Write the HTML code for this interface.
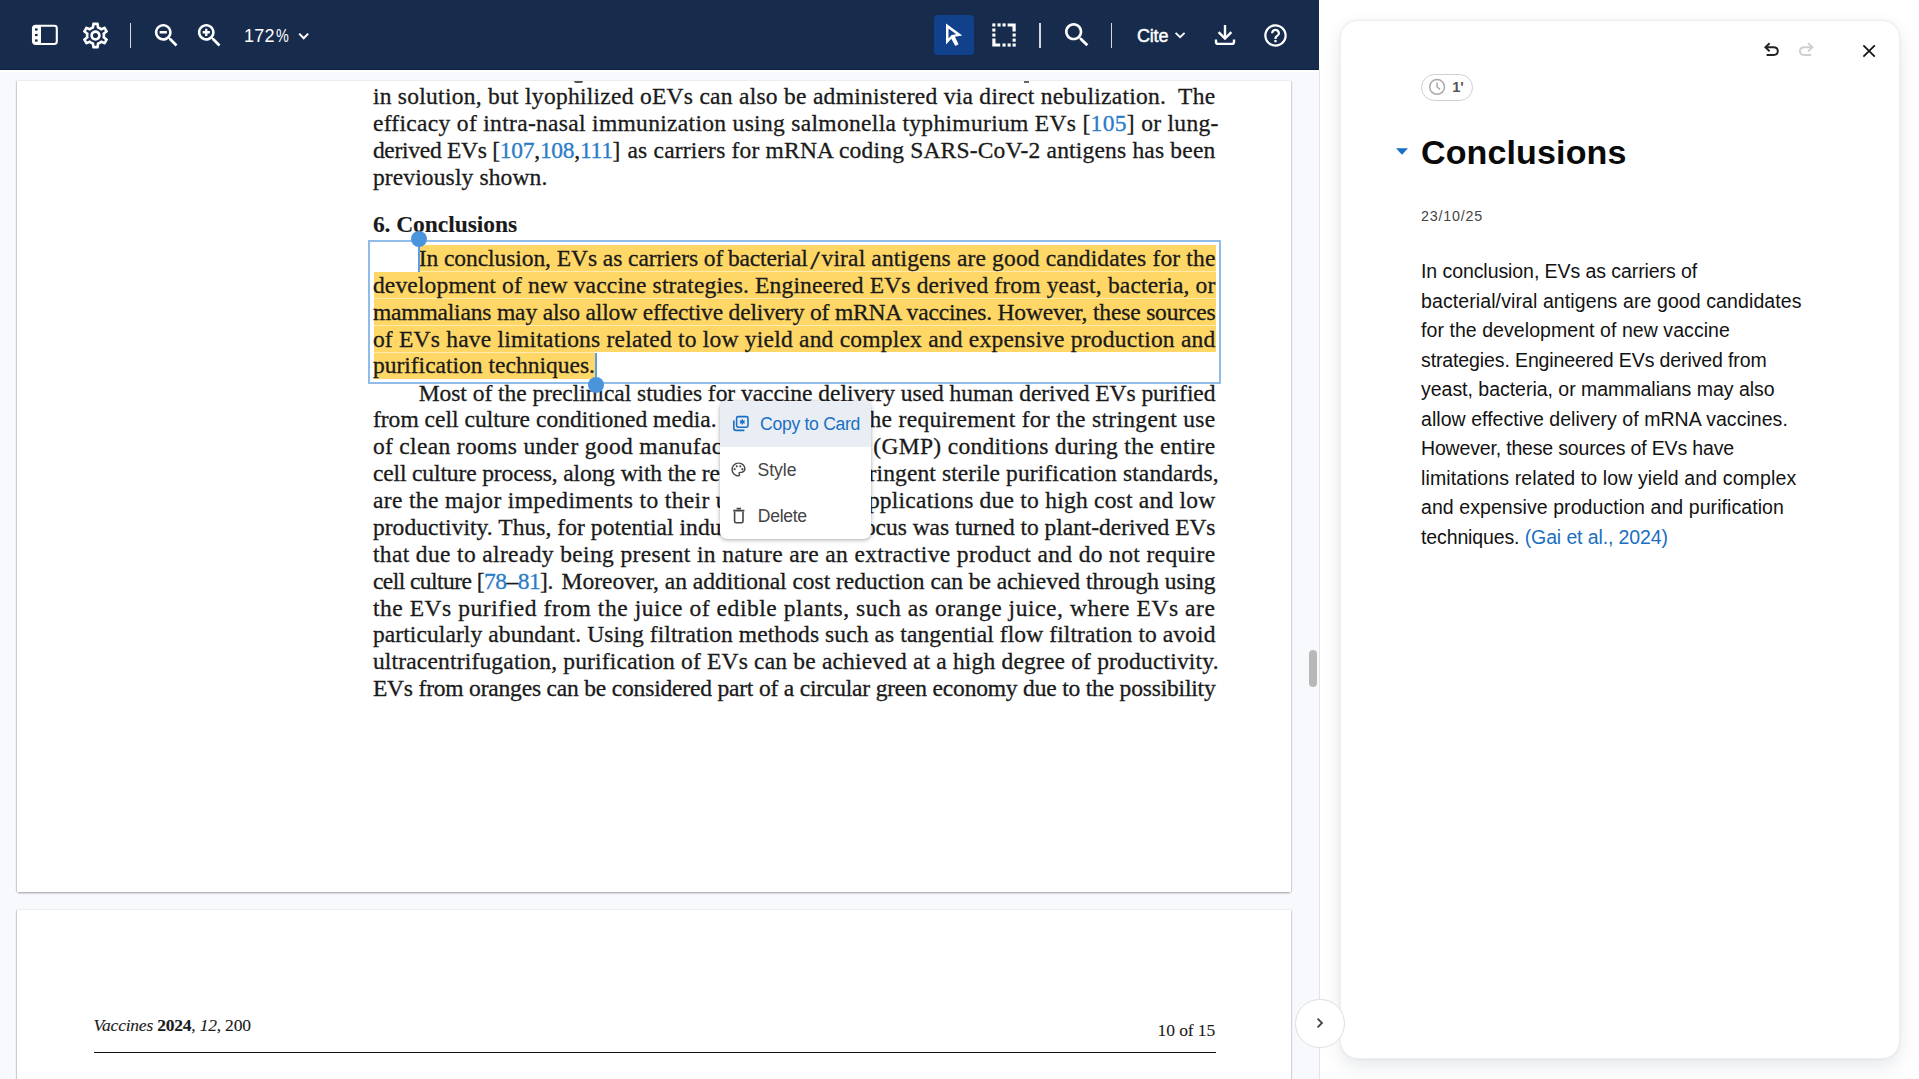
<!DOCTYPE html>
<html>
<head>
<meta charset="utf-8">
<title>PDF viewer</title>
<style>
*{box-sizing:border-box;margin:0;padding:0}
html,body{width:1919px;height:1079px;overflow:hidden;background:#fff;font-family:"Liberation Sans",sans-serif;}
.abs{position:absolute}
#pdfarea{position:absolute;left:0;top:0;width:1319px;height:1079px;background:#f8f9fc;overflow:hidden}
#toolbar{position:absolute;left:0;top:0;width:1319px;height:70px;background:#172b4d;border-bottom:1px solid #0d2247;z-index:5}
#tbline{position:absolute;left:0;top:70px;width:1319px;height:1.5px;background:#fff;z-index:5}
.page{position:absolute;left:17px;width:1274px;background:#fff;box-shadow:0 2px 2px -1px rgba(0,0,0,.34),-1px 0 1px rgba(0,0,0,.16),1px 0 1px rgba(0,0,0,.13)}
#p1{top:81px;height:811px}
#p2{top:910px;height:200px}
.ln{position:absolute;height:27px;line-height:27px;font-family:"Liberation Serif",serif;font-size:23.5px;color:#1a1a1a;white-space:nowrap;z-index:2;-webkit-text-stroke:0.3px #1a1a1a}
.ln a{-webkit-text-stroke:0.3px #2a7cc7}
.ln b{-webkit-text-stroke:0.1px #1a1a1a}
.ln a{color:#2a7cc7}
.hl{position:absolute;background:#ffd766;z-index:1}
#bbox{position:absolute;left:368px;top:240px;width:853px;height:144px;border:2px solid #8fbde8;z-index:1}
.hdl{position:absolute;width:16px;height:16px;border-radius:50%;background:#4a94dc;z-index:3}
.stem{position:absolute;width:2.5px;background:#5b9fe0;z-index:3}
#vsep{position:absolute;left:1319px;top:70px;width:1px;height:1009px;background:#e1e4ea}
#right{position:absolute;left:1320px;top:0;width:599px;height:1079px;background:#fff}
#card{position:absolute;left:1340px;top:20px;width:560px;height:1039px;background:#fff;border-radius:18px;border:1px solid #eceef1;box-shadow:0 7px 18px rgba(23,43,77,.11),0 0 3px rgba(23,43,77,.06)}
.rl{position:absolute;left:1421px;height:30px;line-height:30px;font-size:19.5px;color:#121212;white-space:nowrap}
.rl a{color:#1b6fbf}
#menu{position:absolute;left:720px;top:401px;width:150.5px;height:137.5px;background:#fff;border-radius:7px;box-shadow:0 1px 4px rgba(0,0,0,.32),0 0 1px rgba(0,0,0,.2);overflow:hidden;z-index:4}
.mi{position:absolute;left:0;width:151px;height:46px;font-size:17.6px;color:#444;white-space:nowrap}
.mi span{position:absolute;height:22px;line-height:22px}
.tbtxt{position:absolute;color:#fff;font-size:18px;height:22px;line-height:22px;white-space:nowrap}
.tdiv{position:absolute;background:#d4d7dd}
svg{position:absolute;overflow:visible}
</style>
</head>
<body>
<div id="pdfarea">
  <div class="page" id="p1"></div>
  <div class="page" id="p2"></div>
  <!-- highlight rows -->
  <div class="abs" style="left:420px;top:270px;width:795.5px;height:3px;background:#ffebb0;z-index:1"></div>
  <div class="abs" style="left:373.5px;top:296px;width:842px;height:32px;background:#ffebb0;z-index:1"></div>
  <div class="abs" style="left:373.5px;top:350px;width:221px;height:4px;background:#ffebb0;z-index:1"></div>
  <div class="hl" style="left:420px;top:245.3px;width:795.5px;height:26px"></div>
  <div class="hl" style="left:373.5px;top:272.1px;width:842.3px;height:25.9px"></div>
  <div class="hl" style="left:373.5px;top:298.9px;width:842px;height:26px"></div>
  <div class="hl" style="left:373.5px;top:325.9px;width:842px;height:25.9px"></div>
  <div class="hl" style="left:373.5px;top:352.9px;width:221px;height:26px"></div>
  <div id="bbox"></div>
<div class="ln" style="left:372.9px;top:83px;letter-spacing:0.272px">in solution, but lyophilized oEVs can also be administered via direct nebulization.&nbsp; The</div>
<div class="ln" style="left:372.9px;top:110px;letter-spacing:0.316px">efficacy of intra-nasal immunization using salmonella typhimurium EVs [<a>105</a>] or lung-</div>
<div class="ln" style="left:372.9px;top:137px;letter-spacing:-0.276px">derived EVs [<a>107</a>,<a>108</a>,<a>111</a>]</div>
<div class="ln" style="left:627.5px;top:137px;letter-spacing:0.189px">as carriers for mRNA coding SARS-CoV-2 antigens has been</div>
<div class="ln" style="left:372.9px;top:164px;letter-spacing:0.134px">previously shown.</div>
<div class="ln" style="left:372.9px;top:211px;letter-spacing:-0.062px"><b>6. Conclusions</b></div>
<div class="ln" style="left:418.7px;top:245px;letter-spacing:-0.064px">In conclusion, EVs as carriers of</div>
<div class="ln" style="left:727.9px;top:245px;letter-spacing:-0.132px">bacterial</div>
<div class="ln" style="left:809.2px;top:245px;letter-spacing:0.000px"><span style="display:inline-block;transform:translate(1.3px,2.6px) scale(1.45,1.08);transform-origin:0 72%">/</span></div>
<div class="ln" style="left:821.5px;top:245px;letter-spacing:0.152px">viral antigens are good candidates for the</div>
<div class="ln" style="left:372.9px;top:272px;letter-spacing:0.162px">development of new vaccine strategies. Engineered EVs derived from yeast, bacteria, or</div>
<div class="ln" style="left:372.9px;top:299px;letter-spacing:-0.167px">mammalians may also allow effective delivery of mRNA vaccines. However, these sources</div>
<div class="ln" style="left:372.9px;top:326px;letter-spacing:0.216px">of EVs have limitations related to low yield and complex and expensive production and</div>
<div class="ln" style="left:372.9px;top:352px;letter-spacing:0.009px">purification techniques.</div>
<div class="ln" style="left:418.7px;top:380px;letter-spacing:-0.039px">Most of the preclinical studies for vaccine delivery used human derived EVs purified</div>
<div class="ln" style="left:372.9px;top:406px;letter-spacing:0.031px">from cell culture conditioned media.</div>
<div class="ln" style="left:862.7px;top:406px;letter-spacing:0.311px">the requirement for the stringent use</div>
<div class="ln" style="left:372.9px;top:433px;letter-spacing:0.331px">of clean rooms under good manufac</div>
<div class="ln" style="left:873.3px;top:433px;letter-spacing:0.313px">(GMP) conditions during the entire</div>
<div class="ln" style="left:372.9px;top:460px;letter-spacing:-0.124px">cell culture process, along with the re</div>
<div class="ln" style="left:868.6px;top:460px;letter-spacing:0.108px">ringent sterile purification standards,</div>
<div class="ln" style="left:372.9px;top:487px;letter-spacing:0.365px">are the major impediments to their u</div>
<div class="ln" style="left:867.9px;top:487px;letter-spacing:0.228px">pplications due to high cost and low</div>
<div class="ln" style="left:372.9px;top:514px;letter-spacing:0.053px">productivity. Thus, for potential indu</div>
<div class="ln" style="left:863.9px;top:514px;letter-spacing:-0.041px">ocus was turned to plant-derived EVs</div>
<div class="ln" style="left:372.9px;top:541px;letter-spacing:0.358px">that due to already being present in nature are an extractive product and do not require</div>
<div class="ln" style="left:372.9px;top:568px;letter-spacing:-0.543px">cell culture [<a>78</a>–<a>81</a>].</div>
<div class="ln" style="left:561.6px;top:568px;letter-spacing:-0.024px">Moreover, an additional cost reduction can be achieved through using</div>
<div class="ln" style="left:372.9px;top:595px;letter-spacing:0.554px">the EVs purified from the juice of edible plants, such as orange juice, where EVs are</div>
<div class="ln" style="left:372.9px;top:621px;letter-spacing:0.094px">particularly abundant. Using filtration methods such as tangential flow filtration to avoid</div>
<div class="ln" style="left:372.9px;top:648px;letter-spacing:0.178px">ultracentrifugation, purification of EVs can be achieved at a high degree of productivity.</div>
<div class="ln" style="left:372.9px;top:675px;letter-spacing:-0.187px">EVs from oranges can be considered part of a circular green economy due to the possibility</div>
  <!-- clipped descender bits from the line above the fold -->
  <div class="abs" style="left:574px;top:81px;width:9px;height:1.5px;background:#555;border-radius:0 0 4px 4px;z-index:2"></div>
  <div class="abs" style="left:1024px;top:81px;width:5px;height:1.5px;background:#666;z-index:2"></div>
  <!-- selection handles -->
  <div class="stem" style="left:417.8px;top:245px;height:26.5px"></div>
  <div class="hdl" style="left:411px;top:231px"></div>
  <div class="stem" style="left:594.6px;top:353px;height:26px"></div>
  <div class="hdl" style="left:588px;top:377.3px"></div>
  <!-- page 2 header -->
  <div class="ln" style="left:93.5px;top:1012px;font-size:17.5px;-webkit-text-stroke:0.1px #1a1a1a;letter-spacing:-0.212px"><i>Vaccines</i> <b>2024</b>, <i>12</i>, 200</div>
  <div class="ln" style="left:1157.6px;top:1017px;font-size:17.5px;-webkit-text-stroke:0.1px #1a1a1a;letter-spacing:-0.104px">10 of 15</div>
  <div class="abs" style="left:93.5px;top:1052px;width:1122px;height:1.4px;background:#111;z-index:2"></div>
  <!-- scrollbar thumb -->
  <div class="abs" style="left:1309px;top:650px;width:8px;height:37px;border-radius:4px;background:#b8b8b9;z-index:2"></div>

  <div id="toolbar">
    <!-- sidebar toggle -->
    <svg style="left:30px;top:23px" width="30" height="24" viewBox="0 0 30 24">
      <rect x="3" y="2.8" width="23.8" height="18.2" rx="2.4" fill="none" stroke="#fff" stroke-width="2.1"/>
      <rect x="3" y="3" width="8" height="18" fill="#fff"/>
      <rect x="5" y="5.4" width="2.6" height="2.2" fill="#172b4d"/>
      <rect x="5" y="10.9" width="2.6" height="2.2" fill="#172b4d"/>
      <rect x="5" y="16.4" width="2.6" height="2.2" fill="#172b4d"/>
    </svg>
    <!-- gear -->
    <svg style="left:79.5px;top:19.5px" width="31" height="31" viewBox="0 0 24 24"><path fill="#fff" d="M19.43 12.98c.04-.32.07-.64.07-.98 0-.34-.03-.66-.07-.98l2.11-1.65c.19-.15.24-.42.12-.64l-2-3.46c-.09-.16-.26-.25-.44-.25-.06 0-.12.01-.17.03l-2.49 1c-.52-.4-1.08-.73-1.69-.98l-.38-2.65C14.46 2.18 14.25 2 14 2h-4c-.25 0-.46.18-.49.42l-.38 2.65c-.61.25-1.17.59-1.69.98l-2.49-1c-.06-.02-.12-.03-.18-.03-.17 0-.34.09-.43.25l-2 3.46c-.13.22-.07.49.12.64l2.11 1.65c-.04.32-.07.65-.07.98 0 .33.03.66.07.98l-2.11 1.65c-.19.15-.24.42-.12.64l2 3.46c.09.16.26.25.44.25.06 0 .12-.01.17-.03l2.49-1c.52.4 1.08.73 1.69.98l.38 2.65c.03.24.24.42.49.42h4c.25 0 .46-.18.49-.42l.38-2.65c.61-.25 1.17-.59 1.69-.98l2.49 1c.06.02.12.03.18.03.17 0 .34-.09.43-.25l2-3.46c.12-.22.07-.49-.12-.64l-2.11-1.65zm-1.98-1.71c.04.31.05.52.05.73 0 .21-.02.43-.05.73l-.14 1.13.89.7 1.08.84-.7 1.21-1.27-.51-1.04-.42-.9.68c-.43.32-.84.56-1.25.73l-1.06.43-.16 1.13-.2 1.35h-1.4l-.19-1.35-.16-1.13-1.06-.43c-.43-.18-.83-.41-1.23-.71l-.91-.7-1.06.43-1.27.51-.7-1.21 1.08-.84.89-.7-.14-1.13c-.03-.31-.05-.54-.05-.74s.02-.43.05-.73l.14-1.13-.89-.7-1.08-.84.7-1.21 1.27.51 1.04.42.9-.68c.43-.32.84-.56 1.25-.73l1.06-.43.16-1.13.2-1.35h1.39l.19 1.35.16 1.13 1.06.43c.43.18.83.41 1.23.71l.91.7 1.06-.43 1.27-.51.7 1.21-1.07.85-.89.7.14 1.13zM12 8c-2.21 0-4 1.79-4 4s1.79 4 4 4 4-1.79 4-4-1.79-4-4-4zm0 6c-1.1 0-2-.9-2-2s.9-2 2-2 2 .9 2 2-.9 2-2 2z"/></svg>
    <div class="tdiv" style="left:129.7px;top:23px;width:1.6px;height:25px"></div>
    <!-- zoom out -->
    <svg style="left:150.5px;top:19.6px" width="31" height="31" viewBox="0 0 24 24"><path fill="#fff" d="M15.5 14h-.79l-.28-.27C15.41 12.59 16 11.11 16 9.5 16 5.91 13.09 3 9.5 3S3 5.91 3 9.5 5.91 16 9.5 16c1.61 0 3.09-.59 4.23-1.57l.27.28v.79l5 4.99L20.49 19l-4.99-5zm-6 0C7.01 14 5 11.99 5 9.5S7.01 5 9.5 5 14 7.01 14 9.5 11.99 14 9.5 14zM6.7 8.6h5.6v1.8H6.7z"/></svg>
    <!-- zoom in -->
    <svg style="left:193.7px;top:19.6px" width="31" height="31" viewBox="0 0 24 24"><path fill="#fff" d="M15.5 14h-.79l-.28-.27C15.41 12.59 16 11.11 16 9.5 16 5.91 13.09 3 9.5 3S3 5.91 3 9.5 5.91 16 9.5 16c1.61 0 3.09-.59 4.23-1.57l.27.28v.79l5 4.99L20.49 19l-4.99-5zm-6 0C7.01 14 5 11.99 5 9.5S7.01 5 9.5 5 14 7.01 14 9.5 11.99 14 9.5 14zM8.6 6.7h1.8v1.9h1.9v1.8h-1.9v1.9H8.6v-1.9H6.7V8.600h1.900z"/></svg>
    <div class="tbtxt" style="left:244px;top:24.6px;letter-spacing:0.284px">172</div>
    <div class="tbtxt" style="left:276.4px;top:24.6px;transform:scaleX(.8);transform-origin:0 0">%</div>
    <svg style="left:297px;top:30px" width="14" height="12" viewBox="0 0 14 12"><path d="M2.2 3.6 L6.7 8.2 L11.2 3.6" fill="none" stroke="#fff" stroke-width="2"/></svg>

    <!-- selected cursor tool -->
    <div class="abs" style="left:934px;top:15px;width:40px;height:40px;border-radius:4px;background:#11418a"></div>
    <svg style="left:934px;top:15px" width="40" height="40" viewBox="934 15 40 40"><path fill="#fff" fill-rule="evenodd" d="M946 23.6 L962.3 35.6 L954.9 36.8 L958.6 44.3 L955.3 46.1 L951.3 38.7 L946 44.6 Z M948.5 28.6 L948.5 38.6 L951.6 35 L956.2 34.3 Z"/></svg>
    <!-- marquee -->
    <svg style="left:992px;top:23px" width="24" height="24" viewBox="0 0 24 24" fill="#fff">
      <rect x="0.3" y="0.4" width="3.1" height="3.1"/><rect x="5.5" y="0.4" width="3.1" height="3.1"/><rect x="10.5" y="0.4" width="3.1" height="3.1"/>
      <path d="M15.6 0.4 H23.7 V8.4 H20.5 V3.6 H15.6 Z"/>
      <rect x="20.6" y="10.5" width="3.1" height="3.1"/><rect x="20.6" y="15.6" width="3.1" height="3.1"/><rect x="20.6" y="20.5" width="3.1" height="3.1"/>
      <rect x="0.3" y="5.5" width="3.1" height="3.1"/><rect x="0.3" y="10.5" width="3.1" height="3.1"/>
      <path d="M0.3 15.6 H3.5 V20.4 H8.2 V23.6 H0.3 Z"/>
      <rect x="10.5" y="20.5" width="3.1" height="3.1"/><rect x="15.6" y="20.5" width="3.1" height="3.1"/>
    </svg>
    <div class="tdiv" style="left:1039px;top:23px;width:2px;height:25px"></div>
    <!-- search -->
    <svg style="left:1060.6px;top:19.3px" width="32" height="32" viewBox="0 0 24 24"><path fill="#fff" d="M15.5 14h-.79l-.28-.27C15.41 12.59 16 11.11 16 9.5 16 5.91 13.09 3 9.5 3S3 5.91 3 9.5 5.91 16 9.5 16c1.61 0 3.09-.59 4.23-1.57l.27.28v.79l5 4.99L20.49 19l-4.99-5zm-6 0C7.01 14 5 11.99 5 9.5S7.01 5 9.5 5 14 7.01 14 9.5 11.99 14 9.5 14z"/></svg>
    <div class="tdiv" style="left:1111px;top:23px;width:1.2px;height:25px"></div>
    <div class="tbtxt" style="left:1137px;top:24.6px;-webkit-text-stroke:0.45px #fff;letter-spacing:-0.204px">Cite</div>
    <svg style="left:1173px;top:29px" width="14" height="12" viewBox="0 0 14 12"><path d="M2.6 3.8 L7.1 8.2 L11.6 3.8" fill="none" stroke="#fff" stroke-width="1.8"/></svg>
    <!-- download -->
    <svg style="left:1213px;top:23px" width="24" height="24" viewBox="1213 23 24 24" fill="none" stroke="#fff" stroke-width="2.4">
      <path d="M1225 25 V38"/><path d="M1218.6 32.2 L1225 38.6 L1231.4 32.2"/>
      <path d="M1216 39.4 V42 Q1216 43.9 1218 43.9 H1232 Q1234 43.9 1234 42 V39.4"/>
    </svg>
    <!-- help -->
    <svg style="left:1261.6px;top:21.5px" width="27" height="27" viewBox="0 0 24 24"><path fill="#fff" d="M11 18h2v-2h-2v2zm1-16C6.48 2 2 6.48 2 12s4.48 10 10 10 10-4.48 10-10S17.52 2 12 2zm0 18c-4.41 0-8-3.59-8-8s3.590-8 8-8 8 3.590 8 8-3.590 8-8 8zm0-14c-2.210 0-4 1.790-4 4h2c0-1.100.9-2 2-2s2 .9 2 2c0 2-3 1.750-3 5h2c0-2.250 3-2.500 3-5 0-2.210-1.790-4-4-4z"/></svg>
  </div>
  <div id="tbline"></div>
</div>
<div id="right"></div>
<div id="vsep"></div>
<div id="card"></div>

<!-- card header icons -->
<svg style="left:1762px;top:40px" width="20" height="18" viewBox="1762 40 20 18" fill="none" stroke="#222" stroke-width="1.9">
  <path d="M1769.6 43.2 L1765.4 47.2 L1769.6 51.2"/><path d="M1765.8 47.2 H1773.6 Q1777.8 47.2 1777.8 51.1 Q1777.8 55 1773.6 55 H1766.6"/>
</svg>
<svg style="left:1797px;top:40px" width="20" height="18" viewBox="1797 40 20 18" fill="none" stroke="#cfcfcf" stroke-width="1.9">
  <path d="M1808.2 43.2 L1812.4 47.2 L1808.2 51.2"/><path d="M1812 47.2 H1804.2 Q1800 47.2 1800 51.1 Q1800 55 1804.2 55 H1811.2"/>
</svg>
<svg style="left:1861px;top:43px" width="16" height="16" viewBox="1861 43 16 16" fill="none" stroke="#111" stroke-width="1.7">
  <path d="M1863.4 45.4 L1874.8 56.6 M1874.8 45.4 L1863.4 56.6"/>
</svg>
<!-- reading time pill -->
<div class="abs" style="left:1421px;top:74px;width:52px;height:27px;border:1px solid #cfcfcf;border-radius:14px;background:#fff"></div>
<svg style="left:1428px;top:78px" width="18" height="18" viewBox="0 0 18 18" fill="none" stroke="#a9a9a9" stroke-width="1.5"><circle cx="9.1" cy="8.9" r="7.4"/><path d="M9.1 4.6 V9 L12 11.3"/></svg>
<div class="abs" style="left:1452.3px;top:78px;font-size:14.5px;font-weight:bold;color:#555;line-height:18px">1'</div>
<!-- caret + title -->
<svg style="left:1395px;top:147px" width="14" height="9" viewBox="0 0 14 9"><path d="M1 1.2 H13 L7 7.7 Z" fill="#1a6fc4"/></svg>
<div class="abs" style="left:1421px;top:132px;font-size:34px;font-weight:bold;color:#0a0a0a;line-height:40px;white-space:nowrap;letter-spacing:0.134px">Conclusions</div>
<div class="abs" style="left:1421px;top:206.5px;font-size:14.3px;color:#444;line-height:18px;white-space:nowrap;letter-spacing:0.793px">23/10/25</div>
<div class="rl" style="top:256px;letter-spacing:-0.071px">In conclusion, EVs as carriers of</div>
<div class="rl" style="top:286px;letter-spacing:0.101px">bacterial/viral antigens are good candidates</div>
<div class="rl" style="top:315px;letter-spacing:0.063px">for the development of new vaccine</div>
<div class="rl" style="top:345px;letter-spacing:-0.116px">strategies. Engineered EVs derived from</div>
<div class="rl" style="top:374px;letter-spacing:-0.020px">yeast, bacteria, or mammalians may also</div>
<div class="rl" style="top:404px;letter-spacing:0.048px">allow effective delivery of mRNA vaccines.</div>
<div class="rl" style="top:433px;letter-spacing:-0.170px">However, these sources of EVs have</div>
<div class="rl" style="top:463px;letter-spacing:0.129px">limitations related to low yield and complex</div>
<div class="rl" style="top:492px;letter-spacing:0.073px">and expensive production and purification</div>
<div class="rl" style="top:522px;letter-spacing:-0.120px">techniques. <a>(Gai et al., 2024)</a></div>

<!-- collapse button -->
<div class="abs" style="left:1295.2px;top:998.6px;width:49.4px;height:49.4px;border-radius:50%;background:#fff;border:1px solid #dcdfe4"></div>
<svg style="left:1313px;top:1016px" width="14" height="14" viewBox="0 0 14 14"><path d="M4.6 2.6 L9 7 L4.6 11.4" fill="none" stroke="#444" stroke-width="1.8"/></svg>

<!-- context menu -->
<div id="menu">
  <div class="mi" style="top:0;background:#e9eef4;color:#1a6fc4"><span style="left:40px;top:12px;letter-spacing:-0.296px">Copy to Card</span></div>
  <div class="mi" style="top:46px"><span style="left:37.5px;top:12px;letter-spacing:-0.045px">Style</span></div>
  <div class="mi" style="top:92px"><span style="left:37.8px;top:12px;letter-spacing:-0.310px">Delete</span></div>
  <!-- copy-to-card icon -->
  <svg style="left:12px;top:14px" width="18" height="18" viewBox="0 0 18 18" fill="none" stroke="#1a6fc4" stroke-width="1.6">
    <rect x="4.6" y="1.6" width="11.4" height="10.6" rx="1.6"/>
    <path d="M1.8 5.4 V13 Q1.8 15.4 4.2 15.4 H12.4"/>
    <path d="M10.3 4.3 V9.5 M7.9 5.6 L12.7 8.2 M12.7 5.6 L7.9 8.2" stroke-width="1.3"/>
  </svg>
  <!-- palette icon -->
  <svg style="left:9.8px;top:59.8px" width="17" height="17" viewBox="0 0 24 24"><path fill="#444" d="M12 22C6.49 22 2 17.51 2 12S6.49 2 12 2s10 4.040 10 9c0 3.310-2.690 6-6 6h-1.770c-.28 0-.5.220-.5.500 0 .12.050.23.130.33.410.47.640 1.060.640 1.670A2.500 2.500 0 0 1 12 22zm0-18c-4.410 0-8 3.590-8 8s3.590 8 8 8c.28 0 .5-.22.5-.5a.540.540 0 0 0-.14-.35c-.41-.46-.63-1.050-.63-1.650a2.500 2.500 0 0 1 2.500-2.500H16c2.210 0 4-1.790 4-4 0-3.860-3.590-7-8-7z"/><circle cx="6.5" cy="11.5" r="1.5" fill="#444"/><circle cx="9.500" cy="7.500" r="1.500" fill="#444"/><circle cx="14.500" cy="7.500" r="1.500" fill="#444"/><circle cx="17.500" cy="11.500" r="1.500" fill="#444"/></svg>
  <!-- trash icon -->
  <svg style="left:12px;top:106px" width="14" height="18" viewBox="0 0 14 18" fill="none" stroke="#444" stroke-width="1.6">
    <path d="M1.2 3.6 H12.4"/><path d="M4.6 1.6 H9"/>
    <path d="M2.6 4.4 V14.2 Q2.600 15.800 4.200 15.800 H9.400 Q11 15.800 11 14.200 V4.400"/>
  </svg>
</div>
</body>
</html>
